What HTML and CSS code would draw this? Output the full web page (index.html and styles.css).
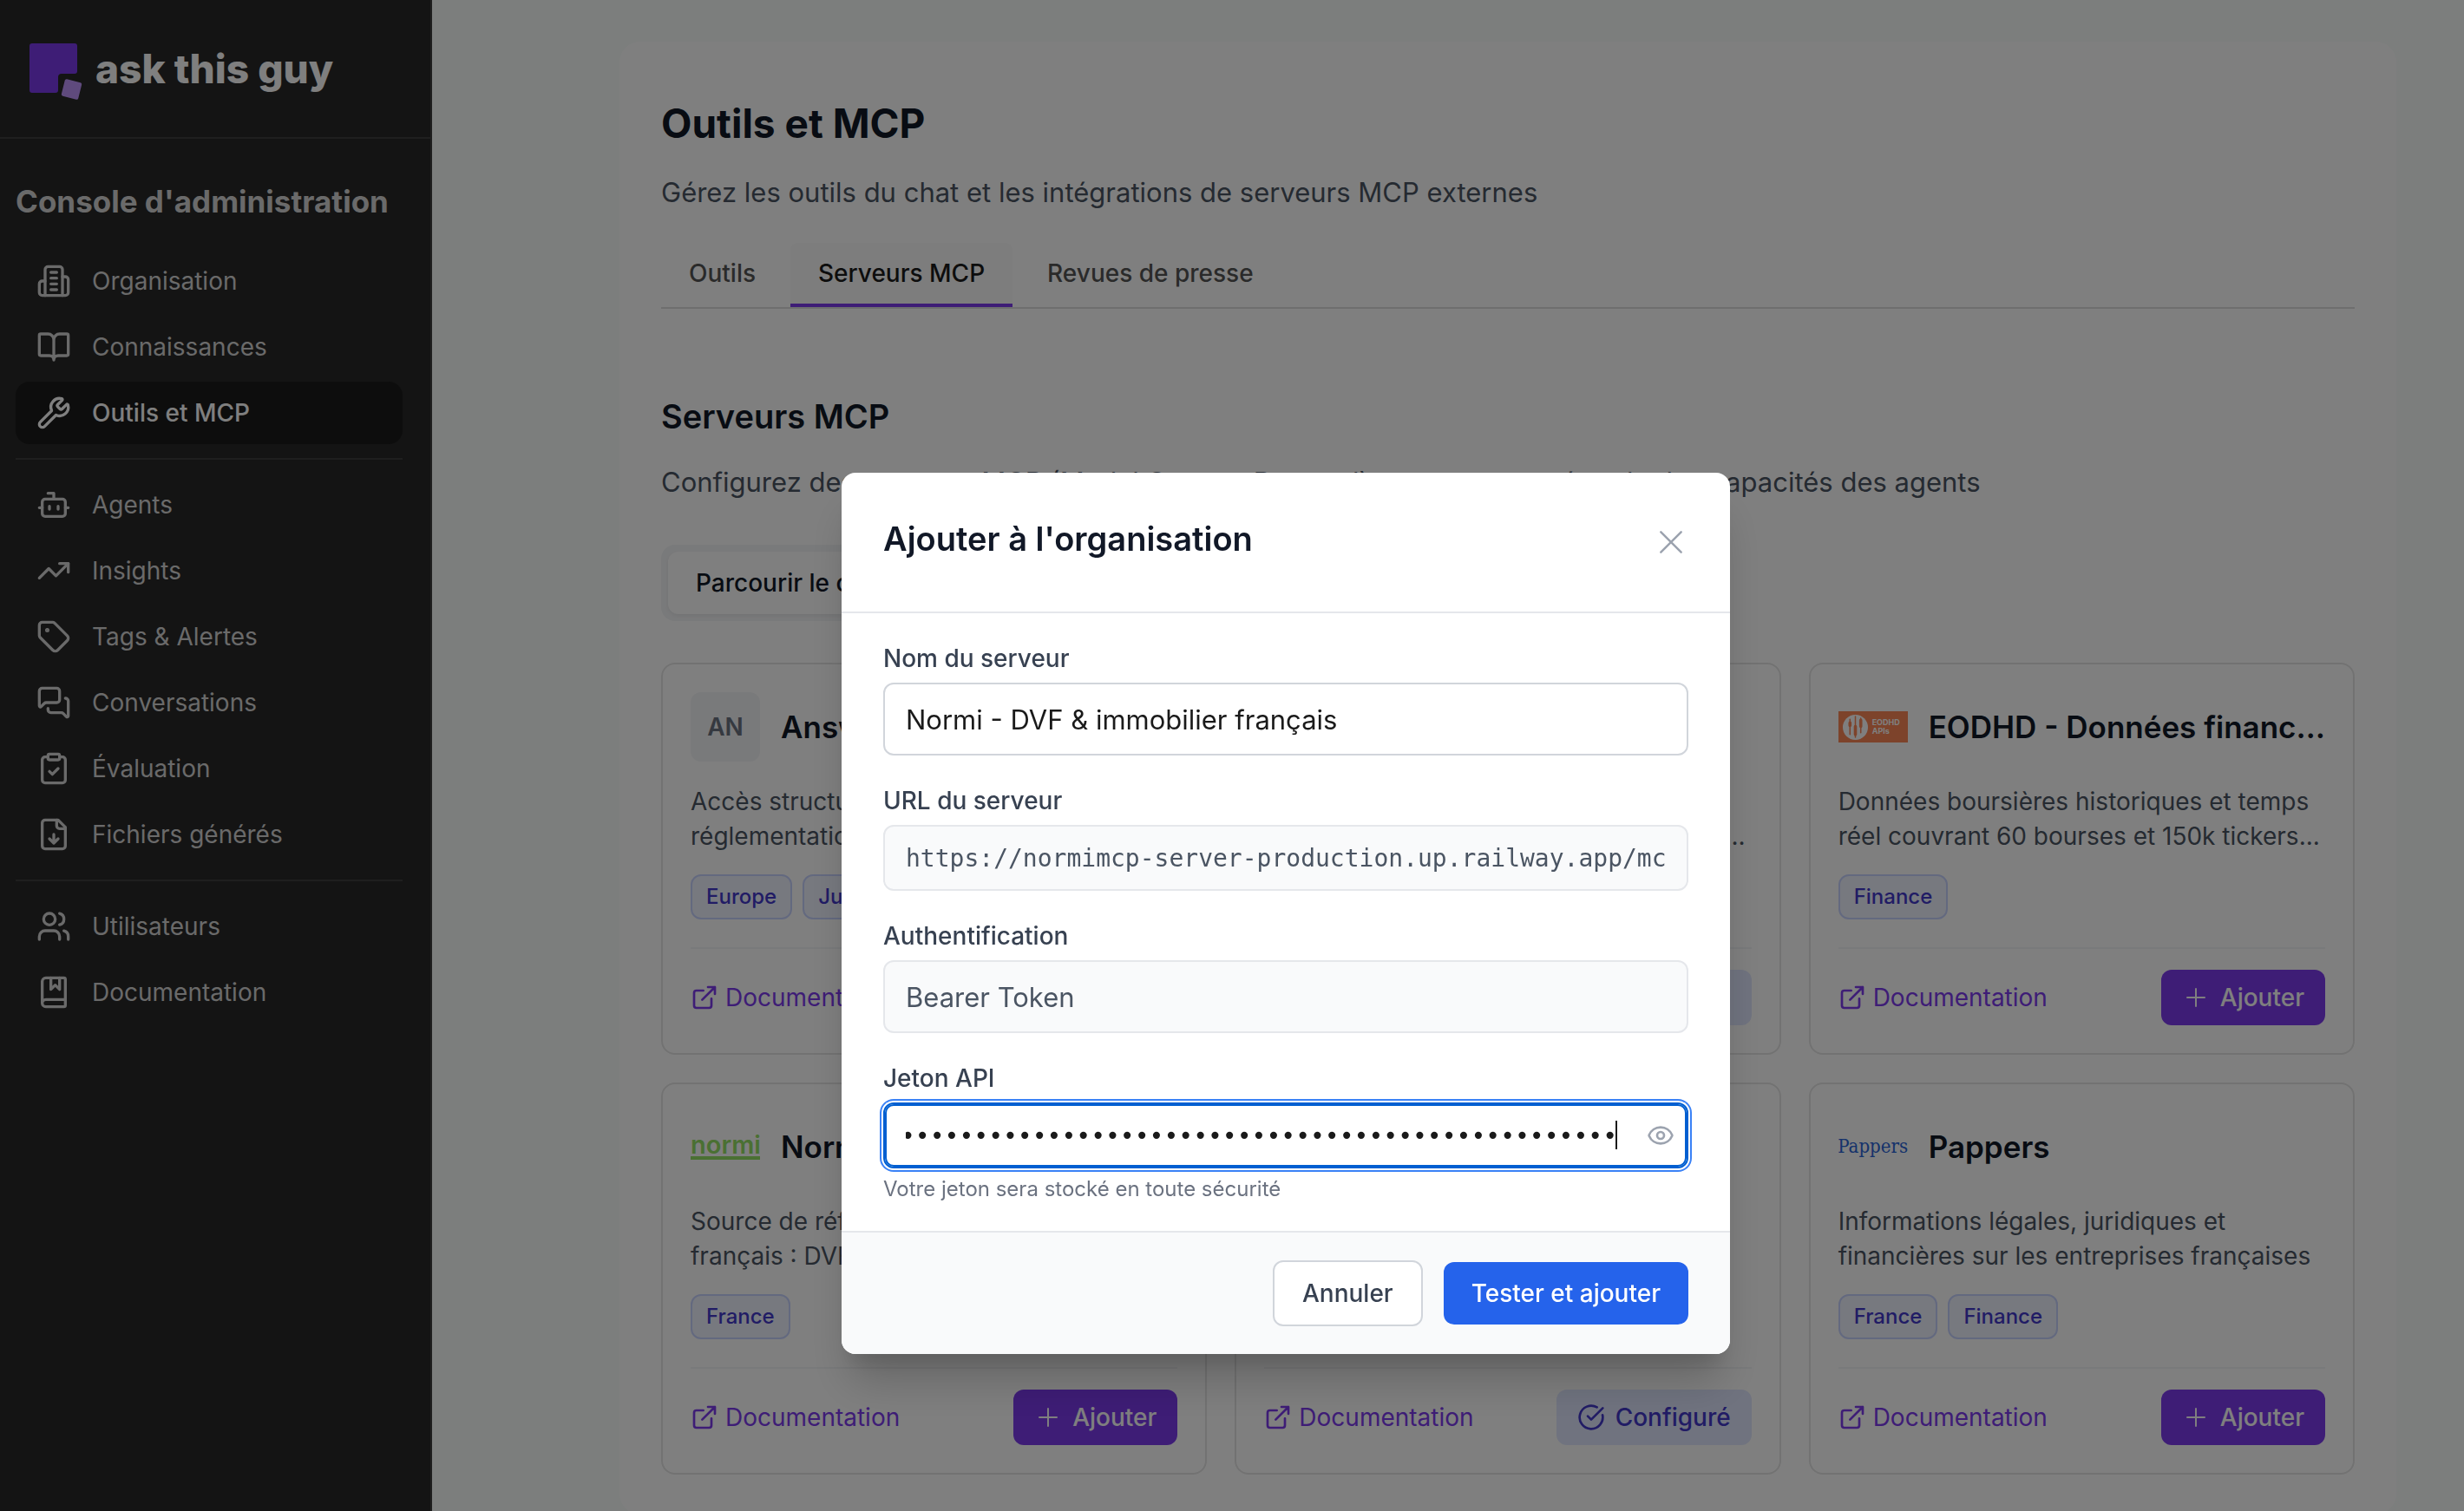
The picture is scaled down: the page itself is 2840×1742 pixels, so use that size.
FILE: index.html
```html
<!DOCTYPE html>
<html lang="fr">
<head>
  <meta charset="UTF-8"/>
  <meta name="viewport" content="width=device-width,initial-scale=1"/>
  <title>ask this guy - Outils et MCP</title>
  <link rel="stylesheet" href="styles.css">
</head>
<body>

<!-- icon sprite -->
<svg class="sprite" aria-hidden="true">
  <symbol id="i-org" viewBox="0 0 24 24"><path d="M6 22V4a2 2 0 0 1 2-2h8a2 2 0 0 1 2 2v18Z"/><path d="M6 12H4a2 2 0 0 0-2 2v6a2 2 0 0 0 2 2h2M18 9h2a2 2 0 0 1 2 2v9a2 2 0 0 1-2 2h-2M10 6h4M10 10h4M10 14h4M10 18h4"/></symbol>
  <symbol id="i-book" viewBox="0 0 24 24"><path d="M12 7v14M3 18a1 1 0 0 1-1-1V4a1 1 0 0 1 1-1h5a4 4 0 0 1 4 4 4 4 0 0 1 4-4h5a1 1 0 0 1 1 1v13a1 1 0 0 1-1 1h-6a3 3 0 0 0-3 3 3 3 0 0 0-3-3z"/></symbol>
  <symbol id="i-wrench" viewBox="0 0 24 24"><path d="M14.7 6.3a1 1 0 0 0 0 1.4l1.6 1.6a1 1 0 0 0 1.4 0l3.106-3.105c.32-.322.863-.22.983.218a6 6 0 0 1-8.259 7.057l-7.91 7.91a1 1 0 0 1-2.999-3l7.91-7.91a6 6 0 0 1 7.057-8.259c.438.12.54.662.219.984z"/></symbol>
  <symbol id="i-bot" viewBox="0 0 24 24"><path d="M12 8V4H8"/><rect x="4" y="8" width="16" height="12" rx="2"/><path d="M2 14h2M20 14h2M15 13v2M9 13v2"/></symbol>
  <symbol id="i-trend" viewBox="0 0 24 24"><path d="M16 7h6v6"/><path d="m22 7-8.5 8.5-5-5L2 17"/></symbol>
  <symbol id="i-tag" viewBox="0 0 24 24"><path d="M12.586 2.586A2 2 0 0 0 11.172 2H4a2 2 0 0 0-2 2v7.172a2 2 0 0 0 .586 1.414l8.704 8.704a2.426 2.426 0 0 0 3.42 0l6.58-6.58a2.426 2.426 0 0 0 0-3.42z"/><circle cx="7.5" cy="7.5" r=".5" fill="currentColor"/></symbol>
  <symbol id="i-chat" viewBox="0 0 24 24"><path d="M16 10a2 2 0 0 1-2 2H6.828a2 2 0 0 0-1.414.586l-2.202 2.202A.71.71 0 0 1 2 14.286V4a2 2 0 0 1 2-2h10a2 2 0 0 1 2 2z"/><path d="M20 9a2 2 0 0 1 2 2v10.286a.71.71 0 0 1-1.212.502l-2.202-2.202A2 2 0 0 0 17.172 19H10a2 2 0 0 1-2-2v-1"/></symbol>
  <symbol id="i-clip" viewBox="0 0 24 24"><rect x="8" y="2" width="8" height="4" rx="1"/><path d="M16 4h2a2 2 0 0 1 2 2v14a2 2 0 0 1-2 2H6a2 2 0 0 1-2-2V6a2 2 0 0 1 2-2h2"/><path d="m9 14 2 2 4-4"/></symbol>
  <symbol id="i-file" viewBox="0 0 24 24"><path d="M15 2H6a2 2 0 0 0-2 2v16a2 2 0 0 0 2 2h12a2 2 0 0 0 2-2V7Z"/><path d="M14 2v4a2 2 0 0 0 2 2h4M12 18v-6M9 15l3 3 3-3"/></symbol>
  <symbol id="i-users" viewBox="0 0 24 24"><path d="M16 21v-2a4 4 0 0 0-4-4H6a4 4 0 0 0-4 4v2"/><circle cx="9" cy="7" r="4"/><path d="M22 21v-2a4 4 0 0 0-3-3.87M16 3.13a4 4 0 0 1 0 7.75"/></symbol>
  <symbol id="i-doc" viewBox="0 0 24 24"><path d="M10 2v8l3-3 3 3V2"/><path d="M4 19.5v-15A2.5 2.5 0 0 1 6.5 2H19a1 1 0 0 1 1 1v18a1 1 0 0 1-1 1H6.5a1 1 0 0 1 0-5H20"/></symbol>
  <symbol id="i-ext" viewBox="0 0 24 24"><path d="M15 3h6v6M10 14 21 3M18 13v6a2 2 0 0 1-2 2H5a2 2 0 0 1-2-2V8a2 2 0 0 1 2-2h6"/></symbol>
  <symbol id="i-plus" viewBox="0 0 24 24"><path d="M4.5 12h15M12 4.5v15"/></symbol>
  <symbol id="i-check" viewBox="0 0 24 24"><path d="M21.8 10A10 10 0 1 1 17 3.335"/><path d="m9 11 3 3L22 4"/></symbol>
  <symbol id="i-close" viewBox="0 0 24 24"><path d="M5 5l14 14M19 5L5 19"/></symbol>
  <symbol id="i-eye" viewBox="0 0 24 24"><path d="M2.062 12.348a1 1 0 0 1 0-.696 10.75 10.75 0 0 1 19.876 0 1 1 0 0 1 0 .696 10.75 10.75 0 0 1-19.876 0"/><circle cx="12" cy="12" r="3"/></symbol>
</svg>

<div class="app">
  <!-- Sidebar -->
  <aside class="sidebar">
    <div class="brand">
      <svg class="brand-mark" viewBox="0 -8 62 74" aria-hidden="true">
        <path fill="#7c3aed" d="M3 0h49a3 3 0 0 1 3 3v29a3 3 0 0 1-3 3H37a4 4 0 0 0-4 4v15a3 3 0 0 1-3 3H3a3 3 0 0 1-3-3V3a3 3 0 0 1 3-3z"/>
        <rect x="38.5" y="43" width="20" height="20" rx="2" fill="#be95fa" transform="rotate(14 48.5 53)"/>
      </svg>
      <span class="brand-name">ask this guy</span>
    </div>
    <nav class="nav">
      <h2 class="nav-title">Console d'administration</h2>
      <a class="nav-item" href="#"><svg class="icon"><use href="#i-org"/></svg>Organisation</a>
      <a class="nav-item" href="#"><svg class="icon"><use href="#i-book"/></svg>Connaissances</a>
      <a class="nav-item active" href="#"><svg class="icon"><use href="#i-wrench"/></svg>Outils et MCP</a>
      <hr class="nav-sep">
      <a class="nav-item" href="#"><svg class="icon"><use href="#i-bot"/></svg>Agents</a>
      <a class="nav-item" href="#"><svg class="icon"><use href="#i-trend"/></svg>Insights</a>
      <a class="nav-item" href="#"><svg class="icon"><use href="#i-tag"/></svg>Tags &amp; Alertes</a>
      <a class="nav-item" href="#"><svg class="icon"><use href="#i-chat"/></svg>Conversations</a>
      <a class="nav-item" href="#"><svg class="icon"><use href="#i-clip"/></svg>Évaluation</a>
      <a class="nav-item" href="#"><svg class="icon"><use href="#i-file"/></svg>Fichiers générés</a>
      <hr class="nav-sep">
      <a class="nav-item" href="#"><svg class="icon"><use href="#i-users"/></svg>Utilisateurs</a>
      <a class="nav-item" href="#"><svg class="icon"><use href="#i-doc"/></svg>Documentation</a>
    </nav>
  </aside>

  <!-- Page -->
  <main class="main">
    <div class="panel">
      <h1>Outils et MCP</h1>
      <p class="lead">Gérez les outils du chat et les intégrations de serveurs MCP externes</p>
      <div class="tabs">
        <button class="tab">Outils</button>
        <button class="tab active">Serveurs MCP</button>
        <button class="tab">Revues de presse</button>
      </div>

      <h2 class="section-title">Serveurs MCP</h2>
      <p class="lead">Configurez des serveurs MCP (Model Context Protocol) externes pour étendre les capacités des agents</p>
      <div class="switch">
        <button class="switch-btn active">Parcourir le catalogue</button>
        <button class="switch-btn">Configurés</button>
      </div>

      <div class="cards">
        <article class="card">
          <header class="card-head"><span class="logo initials">AN</span><h3>Answers</h3></header>
          <p class="desc">Accès structuré à la<br>réglementation</p>
          <div class="tags"><span class="tag">Europe</span><span class="tag">Juridique</span></div>
          <footer class="card-foot">
            <a class="doc" href="#"><svg class="icon"><use href="#i-ext"/></svg>Documentation</a>
            <button class="btn add"><svg class="icon"><use href="#i-plus"/></svg>Ajouter</button>
          </footer>
        </article>

        <article class="card">
          <header class="card-head"><span class="logo initials">DA</span><h3>Data</h3></header>
          <p class="desc">Recherche de données publiques<br>et des jeux de données ouverts français...</p>
          <div class="tags"><span class="tag">France</span></div>
          <footer class="card-foot">
            <a class="doc" href="#"><svg class="icon"><use href="#i-ext"/></svg>Documentation</a>
            <button class="btn done"><svg class="icon"><use href="#i-check"/></svg>Configuré</button>
          </footer>
        </article>

        <article class="card">
          <header class="card-head">
            <span class="logo"><span class="logo-eodhd">
              <svg viewBox="0 0 28 28" aria-hidden="true"><circle cx="14" cy="14" r="14" fill="#fff"/><g fill="none" stroke="#fa8656" stroke-width="1.5" stroke-linecap="round"><path d="M8 5v17M14 2v23M20 4v16"/><path stroke-width="3.5" d="M8 9v3M14 13v9M20 6v7"/></g></svg>
              <span>EODHD<br>APIs</span>
            </span></span>
            <h3>EODHD - Données financières</h3>
          </header>
          <p class="desc">Données boursières historiques et temps<br>réel couvrant 60 bourses et 150k tickers...</p>
          <div class="tags"><span class="tag">Finance</span></div>
          <footer class="card-foot">
            <a class="doc" href="#"><svg class="icon"><use href="#i-ext"/></svg>Documentation</a>
            <button class="btn add"><svg class="icon"><use href="#i-plus"/></svg>Ajouter</button>
          </footer>
        </article>

        <article class="card">
          <header class="card-head"><span class="logo"><span class="logo-normi">normi</span></span><h3>Normi</h3></header>
          <p class="desc">Source de référence<br>français : DVF</p>
          <div class="tags"><span class="tag">France</span></div>
          <footer class="card-foot">
            <a class="doc" href="#"><svg class="icon"><use href="#i-ext"/></svg>Documentation</a>
            <button class="btn add"><svg class="icon"><use href="#i-plus"/></svg>Ajouter</button>
          </footer>
        </article>

        <article class="card">
          <header class="card-head"><span class="logo initials">OP</span><h3>OpenLegi</h3></header>
          <p class="desc">Textes officiels<br>français</p>
          <div class="tags"><span class="tag">France</span></div>
          <footer class="card-foot">
            <a class="doc" href="#"><svg class="icon"><use href="#i-ext"/></svg>Documentation</a>
            <button class="btn done"><svg class="icon"><use href="#i-check"/></svg>Configuré</button>
          </footer>
        </article>

        <article class="card">
          <header class="card-head"><span class="logo"><span class="logo-pappers">Pappers</span></span><h3>Pappers</h3></header>
          <p class="desc">Informations légales, juridiques et<br>financières sur les entreprises françaises</p>
          <div class="tags"><span class="tag">France</span><span class="tag">Finance</span></div>
          <footer class="card-foot">
            <a class="doc" href="#"><svg class="icon"><use href="#i-ext"/></svg>Documentation</a>
            <button class="btn add"><svg class="icon"><use href="#i-plus"/></svg>Ajouter</button>
          </footer>
        </article>
      </div>
    </div>
  </main>
</div>

<!-- Modal -->
<div class="overlay">
  <form class="modal" role="dialog" aria-labelledby="modal-title" onsubmit="return false">
    <header class="modal-head">
      <h2 id="modal-title">Ajouter à l'organisation</h2>
      <button type="button" class="icon-btn" aria-label="Fermer"><svg class="icon close"><use href="#i-close"/></svg></button>
    </header>
    <div class="modal-body">
      <div class="field">
        <label for="name">Nom du serveur</label>
        <input id="name" type="text" value="Normi - DVF &amp; immobilier français">
      </div>
      <div class="field">
        <label for="url">URL du serveur</label>
        <input id="url" class="mono locked" type="text" readonly value="https://normimcp-server-production.up.railway.app/mcp">
      </div>
      <div class="field">
        <label for="auth">Authentification</label>
        <input id="auth" class="locked" type="text" readonly value="Bearer Token">
      </div>
      <div class="field">
        <label for="token">Jeton API</label>
        <div class="secret">
          <input id="token" class="mono" type="password" value="nrm_0123456789012345678901234567890123456789abcde">
          <span class="caret"></span>
          <button type="button" class="icon-btn eye" aria-label="Afficher"><svg class="icon"><use href="#i-eye"/></svg></button>
        </div>
        <p class="hint">Votre jeton sera stocké en toute sécurité</p>
      </div>
    </div>
    <footer class="modal-foot">
      <button type="button" class="btn cancel">Annuler</button>
      <button type="submit" class="btn submit">Tester et ajouter</button>
    </footer>
  </form>
</div>

<script>
  // put the cursor at the end of the token
  const token = document.getElementById('token');
  token.focus({preventScroll: true});
  token.setSelectionRange(token.value.length, token.value.length);
  token.scrollLeft = token.scrollWidth;
</script>
</body>
</html>
```

FILE: styles.css
```css
*{box-sizing:border-box}
body{margin:0;font-family:Inter,"Noto Sans",sans-serif;font-size:28px;line-height:40px;color:#1a1a1a;background:#f8fcfa;height:100vh;overflow:hidden}
h1,h2,h3,p{margin:0}
button,input{font:inherit;color:inherit}
button{border:none;background:none;padding:0;cursor:pointer}
a{text-decoration:none}

.sprite{position:absolute;width:0;height:0}
.icon{width:32px;height:32px;flex:none;fill:none;stroke:currentColor;stroke-width:2;stroke-linecap:round;stroke-linejoin:round}

.app{display:flex;height:100vh}

/* sidebar */
.sidebar{width:498px;flex:none;background:#282828;border-right:2px solid #3e3e3e}
.brand{display:flex;align-items:center;gap:14px;height:160px;padding:0 34px;border-bottom:2px solid #3e3e3e}
.brand-mark{width:62px;height:74px}
.brand-name{font-size:46px;line-height:56px;font-weight:800;color:#fff}
.nav{display:flex;flex-direction:column;gap:4px;padding:48px 32px 0 18px}
.nav-title{font-size:35px;line-height:48px;font-weight:700;color:#d4d4d4;white-space:nowrap;margin-bottom:28px}
.nav-item{display:flex;align-items:center;gap:24px;height:72px;padding:0 24px;border-radius:16px;color:#d4d4d4}
.nav-item .icon{width:40px;height:40px}
.nav-item.active{background:#1a1a1a;color:#fff;font-weight:500}
.nav-sep{width:100%;height:2px;margin:12px 0;border:none;background:#3e3e3e}

/* page */
.main{flex:1;padding:48px 78px 0 216px}
.panel{background:#fff;border-radius:24px;padding:62px 48px 46px}
h1{font-size:46px;line-height:64px;font-weight:700;color:#111827}
.lead{font-size:31px;line-height:48px;color:#4b5563}
h1 + .lead{margin-top:24px}
.tabs{display:flex;gap:8px;margin-top:34px;border-bottom:2px solid #dcdcdc}
.tab{height:74px;padding:0 32px;border-bottom:4px solid transparent;border-radius:8px 8px 0 0;font-weight:500;color:#555}
.tab.active{background:#fafafa;border-color:#7c3aed;color:#1a1a1a}
.section-title{margin-top:96px;font-size:38px;line-height:56px;font-weight:600;color:#111827}
.section-title + .lead{margin-top:24px}
.switch{display:flex;gap:8px;width:fit-content;margin-top:48px;padding:8px;border-radius:16px;background:#f3f4f6}
.switch-btn{height:72px;padding:0 32px;border-radius:12px;font-weight:500;color:#6b7280}
.switch-btn.active{background:#fff;color:#111827;box-shadow:0 2px 4px rgba(0,0,0,.06)}

.cards{display:grid;grid-template-columns:repeat(3,1fr);gap:32px;margin-top:48px}
.card{min-width:0;padding:32px;border:2px solid #e5e5e5;border-radius:16px}
.card-head{display:flex;align-items:center;gap:24px;height:80px}
.card h3{font-size:35px;line-height:48px;font-weight:600;color:#111827;overflow:hidden;text-overflow:ellipsis;white-space:nowrap}
.logo{display:flex;align-items:center;justify-content:center;width:80px;height:80px;flex:none;border-radius:12px}
.initials{background:#f3f4f6;color:#6b7280;font-weight:600}
.logo-eodhd{display:flex;align-items:center;gap:5px;width:80px;height:36px;padding-left:5px;background:#fa8656;color:#fff;font-size:9px;line-height:10px;font-weight:700}
.logo-eodhd svg{width:29px;height:29px}
.logo-normi{width:80px;border-bottom:4px solid #95e066;color:#95e066;font-size:29px;line-height:26px;font-weight:600;text-align:center}
.logo-pappers{font-family:"DejaVu Serif Condensed","DejaVu Serif",serif;font-size:22px;color:#2a64d6}
.desc{margin-top:26px;color:#4b5563;white-space:nowrap}
.tags{display:flex;gap:12px;margin-top:24px}
.tag{height:52px;padding:0 16px;border:2px solid #c7d2fe;border-radius:12px;background:#eef2ff;color:#4338ca;font-size:24px;line-height:48px;font-weight:500}
.card-foot{display:flex;align-items:center;justify-content:space-between;margin-top:32px;padding-top:24px;border-top:2px solid #f3f4f6}
.doc{display:flex;align-items:center;gap:8px;color:#7c3aed}

.btn{display:flex;align-items:center;gap:12px;border-radius:12px;font-weight:500}
.add,.done{height:64px;padding:0 24px}
.add{background:#7c3aed;color:#fff}
.add .icon{stroke-width:1.5}
.done{background:#e0e7ff;color:#4338ca}

/* modal */
.overlay{position:fixed;inset:0;display:flex;align-items:center;justify-content:center;padding:364px 0 0 124px;background:rgba(0,0,0,.5)}
.modal{width:1024px;border-radius:16px;background:#fff;overflow:hidden;box-shadow:0 40px 50px -10px rgba(0,0,0,.2),0 20px 20px -10px rgba(0,0,0,.1)}
.modal-head{display:flex;align-items:center;justify-content:space-between;height:162px;padding:0 48px;border-bottom:2px solid #e5e7eb}
.modal-head h2{margin-bottom:8px;font-size:38px;line-height:48px;font-weight:600;color:#111827}
.icon-btn{display:flex;color:#9ca3af}
.close{width:40px;height:40px;stroke-width:1.5}
.modal-body{display:flex;flex-direction:column;gap:32px;padding:32px 48px}
.field{display:flex;flex-direction:column;gap:8px}
.field label{font-weight:500;color:#374151}
.field input{width:100%;height:84px;padding:0 24px;border:2px solid #d1d5db;border-radius:12px;background:#fff;font-size:31px;outline:none}
.field .mono{height:76px;font-family:"DejaVu Sans Mono",monospace;font-size:28px}
.field .locked{background:#f9fafb;border-color:#e5e7eb;color:#4b5563}
.secret{position:relative;display:flex}
.field .secret input{padding-right:80px;border-color:#005fd1;box-shadow:inset 0 0 0 2px #005fd1,0 0 0 2px #fff,0 0 0 4px #3b82f6;caret-color:transparent}
.caret{position:absolute;right:82px;top:21px;width:2px;height:33px;background:#1a1a1a}
.eye{position:absolute;right:16px;top:22px}
.hint{font-size:24px;line-height:32px;color:#6b7280}
.modal-foot{display:flex;align-items:center;justify-content:flex-end;gap:24px;height:142px;padding:0 48px;border-top:2px solid #e5e7eb;background:#f9fafb}
.cancel{height:76px;padding:0 32px;border:2px solid #d1d5db;background:#fff;color:#374151}
.submit{height:72px;padding:0 32px;background:#2563eb;color:#fff}
```
